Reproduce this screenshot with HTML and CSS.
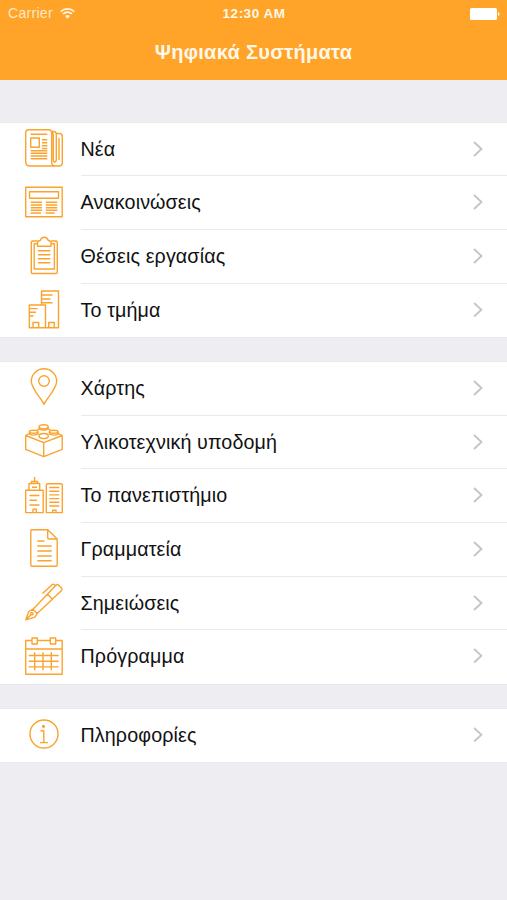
FILE: index.html
```html
<!DOCTYPE html>
<html lang="el">
<head>
<meta charset="utf-8">
<title>Ψηφιακά Συστήματα</title>
<link rel="stylesheet" href="styles.css">
</head>
<body>
<header class="header">
  <div class="status">
    <div class="carrier"><span>Carrier</span>
      <svg class="wifi" viewBox="0 0 15 11"><path d="M.8 3.6a9.6 9.6 0 0 1 13.4 0M3.1 6a6.3 6.3 0 0 1 8.8 0"/><path class="dot" d="M5 8.1a3.6 3.6 0 0 1 5 0L7.500 10.800z"/></svg>
    </div>
    <div class="time">12:30 AM</div>
    <svg class="battery" viewBox="0 0 30 12"><rect width="27" height="12" rx="1.500"/><path d="M28 4q1.500.5 1.500 2T28 8z"/></svg>
  </div>
  <h1 class="title">Ψηφιακά Συστήματα</h1>
</header>
<main>
  <ul class="group">
    <li class="row">
      <svg class="icon" viewBox="0 0 38 38"><path d="M3.500.7h20q3.200 0 3.200 3.200V33q0 4 3.300 4H5Q.7 37 .7 32.700V3.500Q.7.7 3.500.7zM26.700 2.500h2q2.600 0 2.600 3.500v24q0 3-1.500 3T28.300 30V6q0-2-1.600-3.500M31.300 4.500h3q3 0 3 3v26q0 3.500-3.500 3.500H30M5.700 9h8.600v9.300H5.700zM5.700 5.300h16.600M17 10.700h5.300M17 13.700h5.300M17 16.700h5.300M17 19.500h5.300M5.700 21.700h16.600M5.700 24.300h16.600M5.700 27h16.600M5.700 29.700h16.600M34 9v22"/></svg>
      <a class="label">Νέα</a><svg class="chevron" viewBox="0 0 10 16"><path d="M1 1l7.500 7L1 15"/></svg>
    </li>
    <li class="row">
      <svg class="icon" viewBox="0 0 38 38"><path d="M.7 4.200h36.500v29.600H.7zM4.500 8.800h29v6.400h-29zM5.700 19.300H17M5.700 22H17M5.700 24.700H17M5.700 27.300H17M5.700 30H16M20.700 19.300h11.600M20.700 22h11.600M20.700 24.700h11.600M20.700 27.300h11.600M20.700 30h9"/></svg>
      <a class="label">Ανακοινώσεις</a><svg class="chevron" viewBox="0 0 10 16"><path d="M1 1l7.500 7L1 15"/></svg>
    </li>
    <li class="row">
      <svg class="icon" viewBox="0 0 38 38"><path d="M12.500 5H7.500Q6.300 5 6.300 6.200v30.100q0 1.200 1.200 1.200h23.600q1.200 0 1.200-1.200V6.200q0-1.200-1.200-1.200h-5M12.300 7.700H9.200V33h20.200V7.700h-3.200M12.500 10.200V6.800q0-2 2.800-2.300 1-3.200 4-3.200t4 3.200q2.700.3 2.700 2.300v3.400zM13 14.700h12.300M13 18.700h12.300M13 22.700h12.300M13 26.700h12.300"/></svg>
      <a class="label">Θέσεις εργασίας</a><svg class="chevron" viewBox="0 0 10 16"><path d="M1 1l7.500 7L1 15"/></svg>
    </li>
    <li class="row">
      <svg class="icon" viewBox="0 0 38 38"><path d="M16.500 15V1h17v36.800H4.300V15h16.200v22.800M8 37.500v-5h5.700v5M23.700 37.500v-5h5.600v5M17 5h10.500M17 9h8.500M17 12.800h10.500M4.500 18.600h8.200M4.500 22.300h6.500M4.500 26h4"/></svg>
      <a class="label">Το τμήμα</a><svg class="chevron" viewBox="0 0 10 16"><path d="M1 1l7.500 7L1 15"/></svg>
    </li>
  </ul>
  <ul class="group">
    <li class="row">
      <svg class="icon" viewBox="0 0 38 38"><path d="M19 36.300C16 29.500 6.300 21 6.300 13.300a12.700 12.600 0 0 1 25.400 0C31.700 21 22 29.500 19 36.300z"/><circle cx="19" cy="13" r="5.300"/></svg>
      <a class="label">Χάρτης</a><svg class="chevron" viewBox="0 0 10 16"><path d="M1 1l7.500 7L1 15"/></svg>
    </li>
    <li class="row">
      <svg class="icon" viewBox="0 0 38 38"><path d="M4.500 11.500L.7 13.500v13.800l18 7.300L37.200 27.300V13.500l-3.800-2M.7 13.500l18 7.200L37.200 13.500M18.700 20.700v13.900M13.500 7.200l-1.500.6M24 7.200l1.500.6M4.500 9.700v2.400q3 2 8.500 0V9.700M24.500 9.700v2.400q5 2 8.500 0V9.700M14.200 5v2.200q4.500 2 9 0V5"/><ellipse cx="18.700" cy="4.700" rx="4.500" ry="2"/><ellipse cx="8.700" cy="9.700" rx="4.300" ry="1.500"/><ellipse cx="28.700" cy="9.700" rx="4.300" ry="1.500"/><ellipse cx="18.700" cy="14" rx="4.600" ry="2.500"/></svg>
      <a class="label">Υλικοτεχνική υποδομή</a><svg class="chevron" viewBox="0 0 10 16"><path d="M1 1l7.500 7L1 15"/></svg>
    </li>
    <li class="row">
      <svg class="icon" viewBox="0 0 38 38"><path d="M.7 14.300h17.500v22.300H.7zM4 14.300V7.500h10.700v6.800M6.500 7.500V5.500h6v2M9.600 1v4.500M7 11.300h5M4.500 19.500h10M4.500 24.300h7.500M4.500 29h10M8 36.500v-3.300h3.300v3.300M21.300 9q0-1.300 1.300-1.300H36q1.300 0 1.300 1.300v27.600h-16zM24.300 11.500h10M24.300 15.200h10M24.300 18.900h10M24.300 22.600h10M24.300 26.300h10M24.300 30h10M27.700 36.500v-2.200H31v2.200"/></svg>
      <a class="label">Το πανεπιστήμιο</a><svg class="chevron" viewBox="0 0 10 16"><path d="M1 1l7.500 7L1 15"/></svg>
    </li>
    <li class="row">
      <svg class="icon" viewBox="0 0 38 38"><path d="M7 .7h15.700l9.500 9.300v26q0 1.200-1.200 1.200H7q-1.200 0-1.200-1.200V1.900Q5.800.7 7 .7zM22.700.7V8.800q0 1.200 1.200 1.200h8.300M12.300 12h7.200M12.300 17h14.400M12.300 22h14.400M12.300 27h14.400M12.300 31.700h14.400"/></svg>
      <a class="label">Γραμματεία</a><svg class="chevron" viewBox="0 0 10 16"><path d="M1 1l7.500 7L1 15"/></svg>
    </li>
    <li class="row">
      <svg class="icon" viewBox="0 0 38 38"><path d="M.8 36.800L3.700 28.500 8 26.200l4.200 4.300L10 34.200zM.8 36.800l5.300-5.400M8 26.200L31 2.300q1.300-1.300 2.600-.2L36.500 5q1.200 1.300 0 2.500L12.200 30.500M22.500 11.200l4.600 4.600M17.500 10.600L27 1.700q1.200-1 2.500 0l.7.900"/><circle cx="6.800" cy="30.700" r="1.200"/></svg>
      <a class="label">Σημειώσεις</a><svg class="chevron" viewBox="0 0 10 16"><path d="M1 1l7.500 7L1 15"/></svg>
    </li>
    <li class="row">
      <svg class="icon" viewBox="0 0 38 38"><path d="M7 3.500H.7v33.700h36.500V3.500h-6.500M12.300 3.500h13M.7 12h36.500M7 1h5.300v6H7zM25.300 1h5.400v6h-5.400zM9.700 15.200v18M18 15.200v18M26.300 15.200v18M3.700 18.500h30M3.700 24.200h30M3.700 29.900h30"/></svg>
      <a class="label">Πρόγραμμα</a><svg class="chevron" viewBox="0 0 10 16"><path d="M1 1l7.500 7L1 15"/></svg>
    </li>
  </ul>
  <ul class="group">
    <li class="row">
      <svg class="icon" viewBox="0 0 38 38"><circle cx="19" cy="19" r="14"/><path d="M15.500 15.800h3.300v11.800M15 27.600h8"/><circle class="fill" cx="18.500" cy="11.300" r=".9"/></svg>
      <a class="label">Πληροφορίες</a><svg class="chevron" viewBox="0 0 10 16"><path d="M1 1l7.500 7L1 15"/></svg>
    </li>
  </ul>
</main>
</body>
</html>
```
FILE: styles.css
```css
* { box-sizing: border-box; }
body {
  margin: 0;
  min-height: 900px;
  background: #eeedf2;
  color: #111;
  font-family: "Liberation Sans", Arial, sans-serif;
}
.header {
  height: 79.500px;
  background: #ffa329;
  color: #fff8e8;
}
.status {
  display: grid;
  grid-template-columns: 1fr auto 1fr;
  align-items: center;
  height: 27px;
  padding: 0 7px 0 8px;
  font-size: 14px;
  line-height: 27px;
}
.carrier { display: flex; align-items: center; gap: 7px; letter-spacing: .3px; color: #ffe9c4; }
.time { font-weight: bold; font-size: 13.500px; letter-spacing: .5px; }
.wifi { width: 15px; height: 11px; fill: none; stroke: #fff6e4; stroke-width: 1.700; }
.wifi .dot { fill: #fff6e4; stroke: none; }
.battery { width: 30px; height: 12px; justify-self: end; fill: #fff; }
.title {
  margin: 0;
  text-align: center;
  font-size: 20px;
  line-height: 51px;
  font-weight: bold;
  letter-spacing: .3px;
}
.group {
  list-style: none;
  margin: 43px 0 0;
  padding: 0;
  background: #fff;
  box-shadow: 0 0 0 1px #e9e9ec;
}
.group + .group { margin-top: 25.200px; }
.row {
  display: flex;
  height: 53.700px;
  padding-left: 25px;
}
.row:last-child { height: 53.200px; }
.icon {
  width: 38px;
  height: 38px;
  margin: 6.400px 17.500px 0 0;
  fill: none;
  stroke: #fba32f;
  stroke-width: 1.400;
  stroke-linejoin: round;
  overflow: visible;
}
.icon .fill { fill: #fba32f; }
.label {
  flex: 1;
  font-size: 19.700px;
  line-height: 53.700px;
  letter-spacing: .12px;
  white-space: nowrap;
  border-bottom: 1px solid #e9e9eb;
}
.chevron {
  width: 34.500px;
  height: 100%;
  padding: 18px 24.500px 18.700px 0;
  fill: none;
  stroke: #c5c5c9;
  stroke-width: 1.900;
  border-bottom: 1px solid #e9e9eb;
}
.row:last-child .label, .row:last-child .chevron { border-bottom-color: transparent; }
```
